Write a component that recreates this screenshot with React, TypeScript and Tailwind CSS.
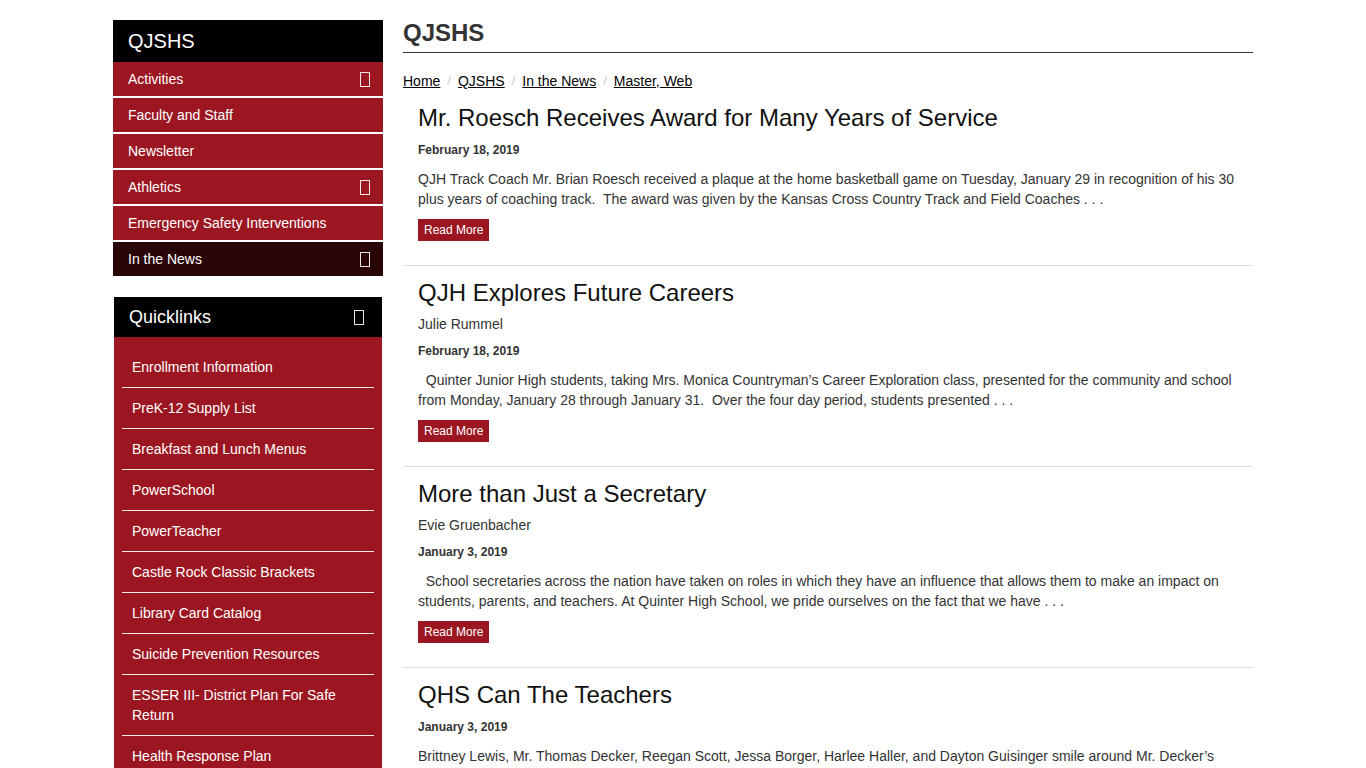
const navItems = [
  { label: "Activities", sub: true },
  { label: "Faculty and Staff", sub: false },
  { label: "Newsletter", sub: false },
  { label: "Athletics", sub: true },
  { label: "Emergency Safety Interventions", sub: false },
  { label: "In the News", sub: true, active: true },
];

const quicklinks = [
  "Enrollment Information",
  "PreK-12 Supply List",
  "Breakfast and Lunch Menus",
  "PowerSchool",
  "PowerTeacher",
  "Castle Rock Classic Brackets",
  "Library Card Catalog",
  "Suicide Prevention Resources",
  "ESSER III- District Plan For Safe Return",
  "Health Response Plan",
];

const articles = [
  {
    title: "Mr. Roesch Receives Award for Many Years of Service",
    date: "February 18, 2019",
    body: "QJH Track Coach Mr. Brian Roesch received a plaque at the home basketball game on Tuesday, January 29 in recognition of his 30 plus years of coaching track.\u00a0 The award was given by the Kansas Cross Country Track and Field Coaches . . .",
  },
  {
    title: "QJH Explores Future Careers",
    author: "Julie Rummel",
    date: "February 18, 2019",
    body: "\u00a0\u00a0Quinter Junior High students, taking Mrs. Monica Countryman\u2019s Career Exploration class, presented for the community and school from Monday, January 28 through January 31.\u00a0 Over the four day period, students presented . . .",
  },
  {
    title: "More than Just a Secretary",
    author: "Evie Gruenbacher",
    date: "January 3, 2019",
    body: "\u00a0\u00a0School secretaries across the nation have taken on roles in which they have an influence that allows them to make an impact on students, parents, and teachers. At Quinter High School, we pride ourselves on the fact that we have . . .",
  },
  {
    title: "QHS Can The Teachers",
    date: "January 3, 2019",
    body: "Brittney Lewis, Mr. Thomas Decker, Reegan Scott, Jessa Borger, Harlee Haller, and Dayton Guisinger smile around Mr. Decker\u2019s classroom with the cans they collected during the food drive . . .",
  },
];

// empty box glyph used for the expand toggles
function Toggle() {
  return <span className="inline-block w-[10px] h-[15px] border border-white/90" />;
}

function Crumb({ children, last }: { children: string; last?: boolean }) {
  return (
    <>
      <a className="underline">{children}</a>
      {!last && <span className="text-[#ccc] px-[7px] text-[13px]">/</span>}
    </>
  );
}

export default function App() {
  return (
    <div className="min-h-screen bg-white font-['Liberation_Sans',Arial,sans-serif]">
      <div className="w-[1140px] mx-auto pt-[20px] flex gap-[20px]">
        <aside className="w-[270px] shrink-0">
          <div className="bg-black h-[42px] flex items-center px-[15px] text-white text-[20px]">QJSHS</div>
          <ul>
            {navItems.map((item) => (
              <li
                key={item.label}
                className={`h-[34px] mb-[2px] flex items-center justify-between pl-[15px] pr-[13px] text-white text-[14px] ${
                  item.active ? "bg-[#2a0508]" : "bg-[#9c1622]"
                }`}
              >
                <span>{item.label}</span>
                {item.sub && <Toggle />}
              </li>
            ))}
          </ul>

          <div className="mt-[21px] mx-[1px]">
            <div className="bg-black h-[40px] flex items-center justify-between pl-[15px] pr-[18px] text-white text-[18px]">
              <span>Quicklinks</span>
              <Toggle />
            </div>
            <ul className="bg-[#9c1622] pt-[10px] px-[8px] pb-[10px]">
              {quicklinks.map((q) => (
                <li
                  key={q}
                  className="py-[10px] px-[10px] border-b border-white/90 text-white text-[14px] leading-[20px]"
                >
                  {q}
                </li>
              ))}
            </ul>
          </div>
        </aside>

        <main className="w-[850px]">
          <h1 className="text-[24px] font-bold text-[#333] leading-[26px] pb-[6px] border-b border-[#333]">QJSHS</h1>
          <nav className="mt-[18px] text-[14px] text-black flex items-center leading-[20px]">
            <Crumb>Home</Crumb>
            <Crumb>QJSHS</Crumb>
            <Crumb>In the News</Crumb>
            <Crumb last>Master, Web</Crumb>
          </nav>

          {articles.map((a) => (
            <article key={a.title} className="px-[15px] pt-[14px] pb-[24px] border-b border-[#ddd]">
              <h2 className="text-[24px] leading-[26px] text-[#111]">{a.title}</h2>
              {a.author && <p className="mt-[8px] text-[14px] leading-[20px] text-[#333]">{a.author}</p>}
              <p className={`text-[12px] font-bold leading-[17px] text-[#333] ${a.author ? "mt-[9px]" : "mt-[11px]"}`}>
                {a.date}
              </p>
              <p className="mt-[10px] text-[14px] leading-[20px] text-[#333]">{a.body}</p>
              <button className="mt-[10px] bg-[#9c1622] text-white text-[12px] leading-[16px] px-[6px] py-[3px]">
                Read More
              </button>
            </article>
          ))}
        </main>
      </div>
    </div>
  );
}
